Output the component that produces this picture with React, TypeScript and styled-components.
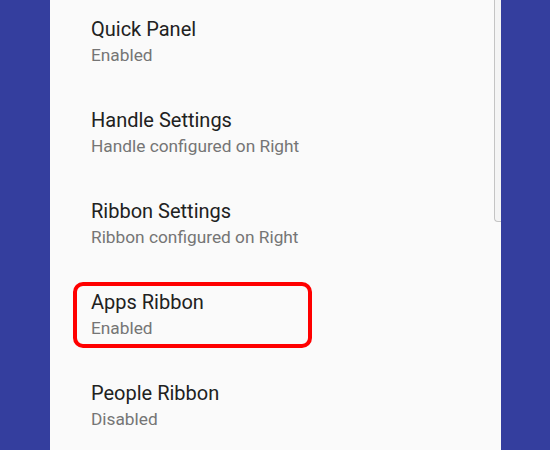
import React from "react";
import styled, { createGlobalStyle } from "styled-components";

const GlobalStyle = createGlobalStyle`
  html, body {
    margin: 0;
    padding: 0;
    background: #343e9e;
    overflow: hidden;
  }
  body {
    font-family: Roboto, "Noto Sans", "Liberation Sans", sans-serif;
  }
`;

const Screen = styled.div`
  width: 550px;
  height: 450px;
  display: flex;
  background: #343e9e;
  overflow: hidden;
`;

const Panel = styled.div`
  position: relative;
  margin-left: 50px;
  width: 451px;
  height: 450px;
  background: #fafafa;
  overflow: hidden;
`;

const List = styled.ul`
  list-style: none;
  margin: -4.5px 0 0 0;
  padding: 0;
  display: flex;
  flex-direction: column;
`;

const Item = styled.li`
  position: relative;
  height: 91px;
  box-sizing: border-box;
  padding-left: 41px;
  display: flex;
  flex-direction: column;
  justify-content: center;
  gap: 4px;
`;

const Title = styled.div`
  font-size: 20px;
  line-height: 24px;
  color: #212121;
`;

const Summary = styled.div`
  font-size: 17.3px;
  line-height: 20px;
  color: #757575;
`;

const Highlight = styled.div`
  position: absolute;
  left: 23px;
  top: 13.5px;
  width: 239px;
  height: 66px;
  box-sizing: border-box;
  border: 4px solid #ff0000;
  border-radius: 10px;
  pointer-events: none;
`;

const ScrollThumb = styled.div`
  position: absolute;
  right: 0;
  top: -4px;
  width: 7px;
  height: 226px;
  box-sizing: border-box;
  border: 1px solid #c4c4c4;
  border-right: none;
  border-radius: 0 0 0 4px;
  background: #f4f4f4;
`;

const items = [
  { title: "Quick Panel", summary: "Enabled" },
  { title: "Handle Settings", summary: "Handle configured on Right" },
  { title: "Ribbon Settings", summary: "Ribbon configured on Right" },
  { title: "Apps Ribbon", summary: "Enabled", highlighted: true },
  { title: "People Ribbon", summary: "Disabled" },
];

export default function App() {
  return (
    <>
      <GlobalStyle />
      <Screen>
        <Panel>
          <List>
            {items.map((it) => (
              <Item key={it.title}>
                <Title>{it.title}</Title>
                <Summary>{it.summary}</Summary>
                {it.highlighted && <Highlight />}
              </Item>
            ))}
          </List>
          <ScrollThumb />
        </Panel>
      </Screen>
    </>
  );
}
